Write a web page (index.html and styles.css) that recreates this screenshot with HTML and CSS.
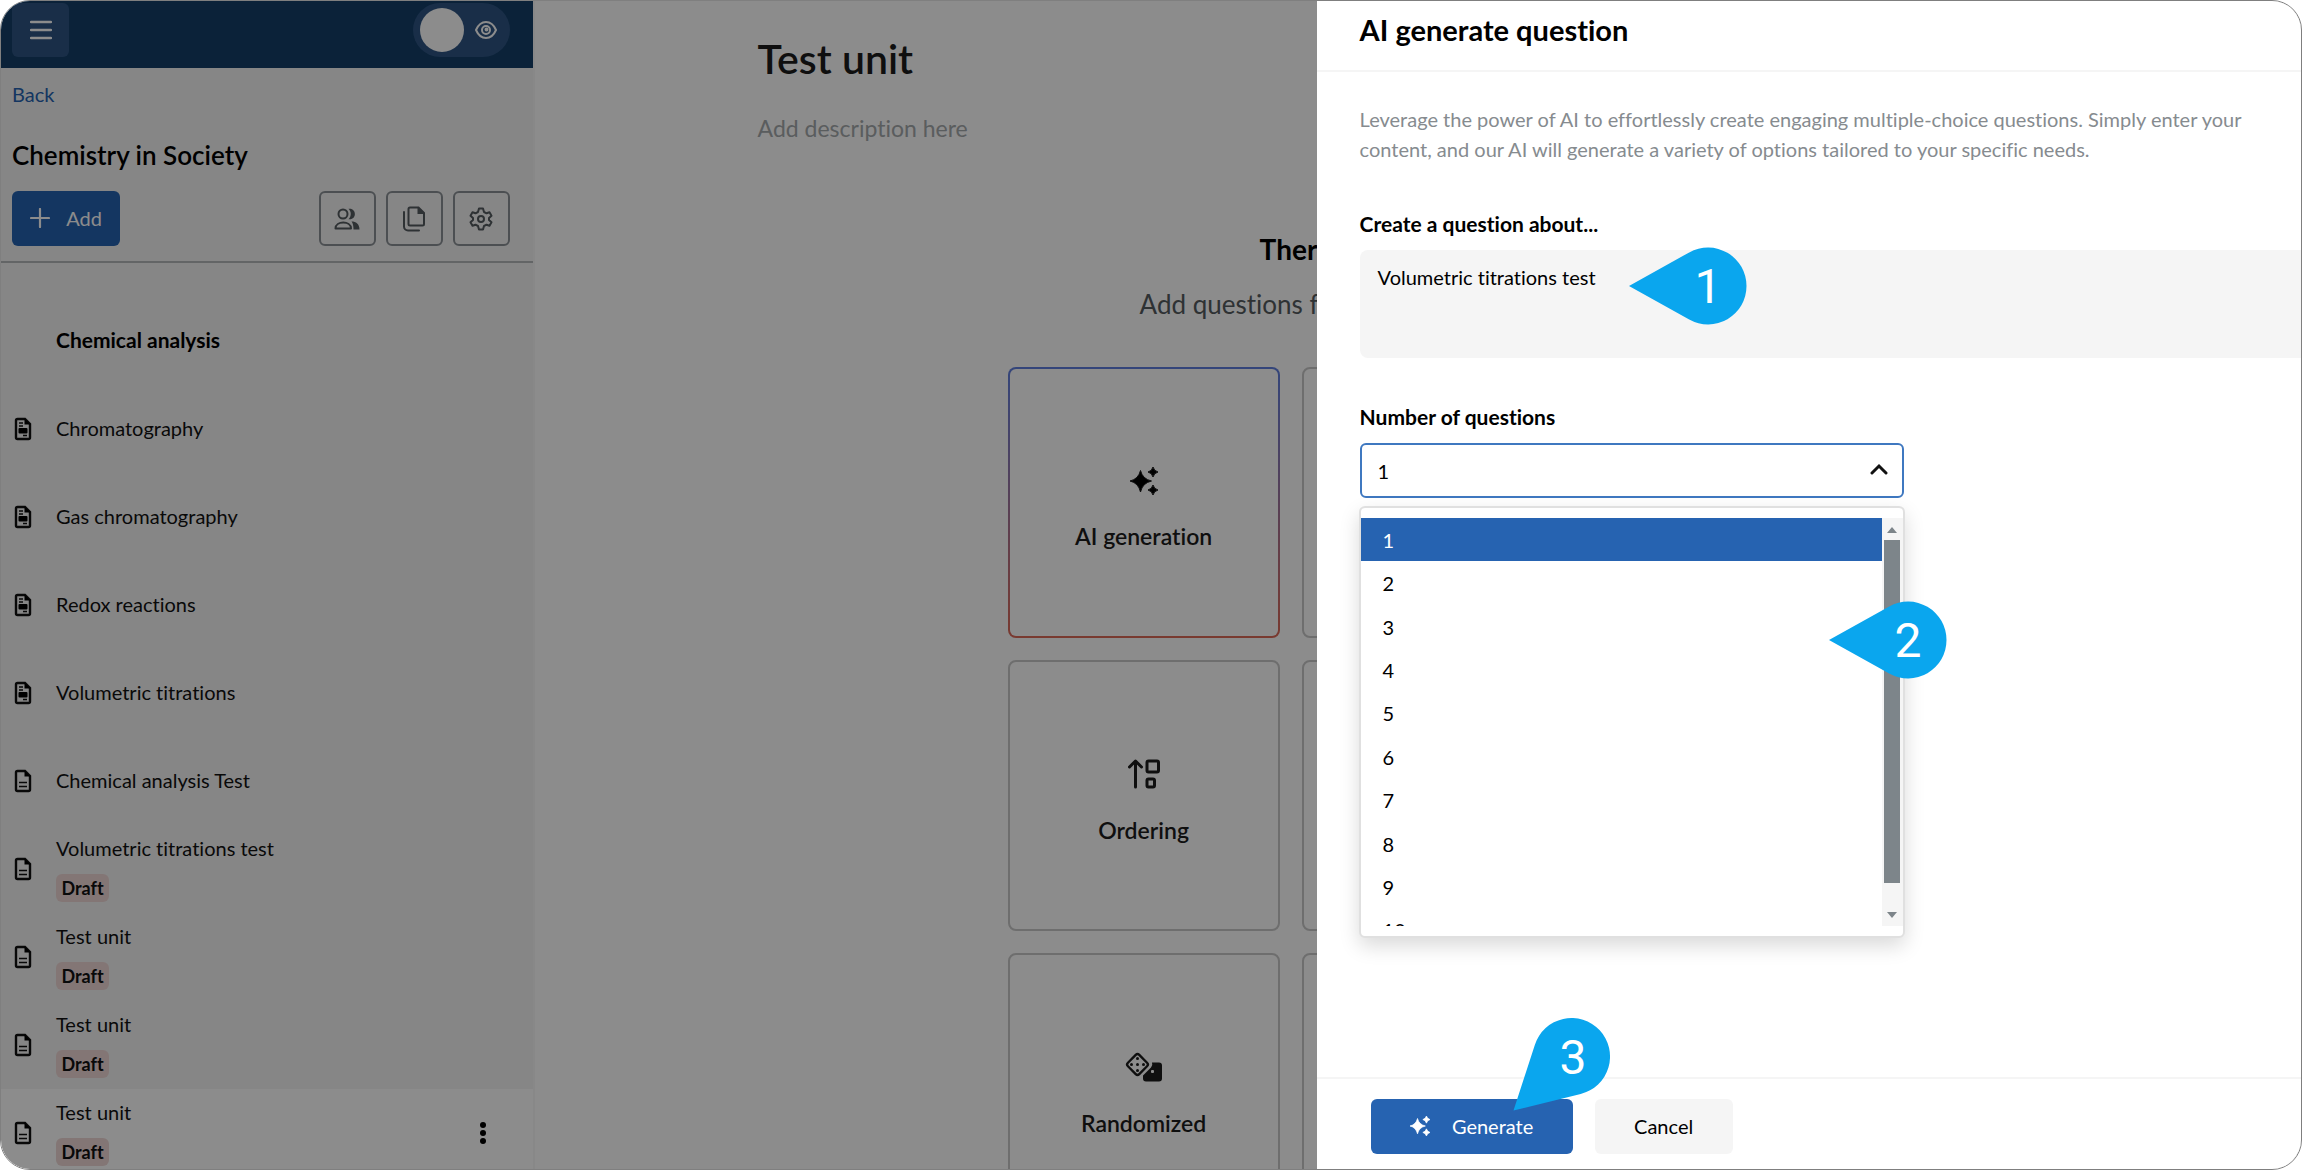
FILE: index.html
```
<!DOCTYPE html>
<html lang="en">

<head>
  <meta charset="utf-8">
  <title>Test unit</title>
  <link rel="stylesheet" href="styles.css">
</head>

<body>
  <!-- shared icons -->
  <svg class="defs" width="0" height="0" aria-hidden="true">
    <defs>
      <symbol id="icon-sparkle" viewBox="0 0 28 28">
        <path d="M10.500 3.500Q12.500 12 21.500 14Q12.500 16 10.500 25Q8.500 16 0 14Q8.500 12 10.500 3.500Z" stroke="currentColor" stroke-width="1" stroke-linejoin="round" />
        <path d="M23 0Q24 4 28 5Q24 6 23 10Q22 6 18 5Q22 4 23 0Z" stroke="currentColor" stroke-width="1" stroke-linejoin="round" />
        <path d="M23 18Q24 22 28 23Q24 24 23 28Q22 24 18 23Q22 22 23 18Z" stroke="currentColor" stroke-width="1" stroke-linejoin="round" />
      </symbol>
      <symbol id="icon-doc" viewBox="0 0 18 24">
        <path d="M3.500 2H11L16 7V20.500A1.500 1.500 0 0 1 14.500 22H3.500A1.500 1.500 0 0 1 2 20.500V3.500A1.500 1.500 0 0 1 3.500 2Z" fill="none" stroke="currentColor" stroke-width="2.400" />
        <path d="M10.500 1.500V7.500H16.500Z" />
        <path d="M5 13.500H13M5 17.500H13" stroke="currentColor" stroke-width="1.600" />
      </symbol>
      <symbol id="icon-article" viewBox="0 0 18 24">
        <path d="M3.500 2H11L16 7V20.500A1.500 1.500 0 0 1 14.500 22H3.500A1.500 1.500 0 0 1 2 20.500V3.500A1.500 1.500 0 0 1 3.500 2Z" fill="none" stroke="currentColor" stroke-width="2.400" />
        <path d="M10.500 1.500V7.500H16.500Z" />
        <path d="M5 6H9M5 9H9M9 18.500H13" stroke="currentColor" stroke-width="1.400" />
        <rect x="4.500" y="11" width="9" height="5.500" rx="1" />
      </symbol>
    </defs>
  </svg>

  <div class="app">
    <aside class="sidebar">
      <header class="topbar">
        <button type="button" class="menu-btn" aria-label="Menu">
          <svg width="22" height="20" viewBox="0 0 22 20"><path d="M1 2H21M1 10H21M1 18H21" fill="none" stroke="#fff" stroke-width="2.400" stroke-linecap="round" /></svg>
        </button>
        <button type="button" class="preview-toggle" aria-label="Preview">
          <span class="knob"></span>
          <svg width="22" height="18" viewBox="0 0 22 18" fill="none" stroke="#fff" stroke-width="2">
            <path d="M1 9Q4.500 1 11 1T21 9Q17.500 17 11 17T1 9Z" />
            <circle cx="11" cy="9" r="4" />
            <circle cx="11.500" cy="8.500" r="1" />
          </svg>
        </button>
      </header>

      <div class="course">
        <a class="back" href="#">Back</a>
        <h2>Chemistry in Society</h2>
        <div class="course-actions">
          <button type="button" class="btn btn-add">
            <svg width="20" height="20" viewBox="0 0 20 20"><path d="M10 1V19M1 10H19" stroke="#fff" stroke-width="2.200" stroke-linecap="round" /></svg>
            Add
          </button>
          <button type="button" class="icon-btn" aria-label="Members">
            <svg width="26" height="22" viewBox="0 0 26 22">
              <circle cx="9" cy="6" r="4.500" fill="none" stroke="currentColor" stroke-width="2" />
              <path d="M1.500 20.500C1.500 12.500 17 12.500 17 20.500Z" fill="none" stroke="currentColor" stroke-width="2" stroke-linejoin="round" />
              <path d="M14.500 .8C23 -.5 23 12.500 14.500 11.200C17.500 8 17.500 4 14.500 .8ZM17.500 13.500C22 13.500 25.500 16 25.500 21.500H19.500C19.500 18 19 15.500 17.500 13.500Z" fill="currentColor" />
            </svg>
          </button>
          <button type="button" class="icon-btn" aria-label="Copy">
            <svg width="24" height="26" viewBox="0 0 24 26">
              <path d="M8 1.500H16.500L22 7V18A1.500 1.500 0 0 1 20.500 19.500H8A1.500 1.500 0 0 1 6.500 18V3A1.500 1.500 0 0 1 8 1.500Z" fill="none" stroke="currentColor" stroke-width="2" />
              <path d="M15.500 1V8H22.500Z" fill="currentColor" />
              <path d="M2 6V20.500A4 4 0 0 0 6 24.500H17" fill="none" stroke="currentColor" stroke-width="2" stroke-linecap="round" />
            </svg>
          </button>
          <button type="button" class="icon-btn" aria-label="Settings">
            <svg width="24" height="24" viewBox="0 0 24 24" fill="none" stroke="currentColor" stroke-width="2" stroke-linejoin="round">
              <path d="M10 1.500H14L15 5L17.500 6.300L20.500 5.300L22.500 8.700L20 11V13L22.500 15.300L20.500 18.700L17.500 17.700L15 19L14 22.500H10L9 19L6.500 17.700L3.500 18.700L1.500 15.300L4 13V11L1.500 8.700L3.500 5.300L6.500 6.300L9 5Z" />
              <circle cx="12" cy="12" r="3" />
            </svg>
          </button>
        </div>
      </div>

      <nav class="units">
        <h3>Chemical analysis</h3>
        <a class="unit" href="#"><svg><use href="#icon-article" /></svg><span>Chromatography</span></a>
        <a class="unit" href="#"><svg><use href="#icon-article" /></svg><span>Gas chromatography</span></a>
        <a class="unit" href="#"><svg><use href="#icon-article" /></svg><span>Redox reactions</span></a>
        <a class="unit" href="#"><svg><use href="#icon-article" /></svg><span>Volumetric titrations</span></a>
        <a class="unit" href="#"><svg><use href="#icon-doc" /></svg><span>Chemical analysis Test</span></a>
        <a class="unit" href="#"><svg><use href="#icon-doc" /></svg><span>Volumetric titrations test <em class="draft">Draft</em></span></a>
        <a class="unit" href="#"><svg><use href="#icon-doc" /></svg><span>Test unit <em class="draft">Draft</em></span></a>
        <a class="unit" href="#"><svg><use href="#icon-doc" /></svg><span>Test unit <em class="draft">Draft</em></span></a>
        <div class="unit active">
          <svg><use href="#icon-doc" /></svg><span>Test unit <em class="draft">Draft</em></span>
          <button type="button" class="more" aria-label="More">
            <svg viewBox="0 0 6 24"><circle cx="3" cy="4" r="3" /><circle cx="3" cy="12" r="3" /><circle cx="3" cy="20" r="3" /></svg>
          </button>
        </div>
      </nav>
    </aside>

    <main class="editor">
      <h1>Test unit</h1>
      <p class="description">Add description here</p>
      <section class="empty">
        <h2>There are no questions</h2>
        <p>Add questions from the options below</p>
        <div class="types">
          <button type="button" class="type ai">
            <svg width="28" height="28"><use href="#icon-sparkle" /></svg>
            AI generation
          </button>
          <button type="button" class="type" aria-label="Multiple choice"></button>
          <button type="button" class="type">
            <svg width="32" height="30" viewBox="0 0 32 30" fill="none" stroke="currentColor" stroke-width="3" stroke-linecap="round" stroke-linejoin="round">
              <path d="M7.500 28V2M1.500 8L7.500 2L13.500 8" />
              <rect x="19" y="2" width="11.500" height="11" rx="1.500" />
              <rect x="19" y="20" width="7.500" height="8" rx="1.500" />
            </svg>
            Ordering
          </button>
          <button type="button" class="type" aria-label="Matching"></button>
          <button type="button" class="type">
            <svg width="38" height="30" viewBox="0 0 38 30">
              <path d="M27 10.500H34A3 3 0 0 1 37 13.500V26.500A3 3 0 0 1 34 29.500H21A3 3 0 0 1 18 26.500V23.500L26 15.500Q28 13 27 10.500Z" fill="currentColor" />
              <rect x="26" y="18" width="3" height="3" rx="1" fill="#fff" />
              <rect x="4.500" y="4.500" width="16" height="16" rx="2.500" transform="rotate(45 12.500 12.500)" fill="none" stroke="currentColor" stroke-width="2.400" />
              <g fill="currentColor">
                <circle cx="12.500" cy="6.500" r="1.500" /><circle cx="6.500" cy="12.500" r="1.500" /><circle cx="12.500" cy="12.500" r="1.500" /><circle cx="18.500" cy="12.500" r="1.500" /><circle cx="12.500" cy="18.500" r="1.500" />
              </g>
            </svg>
            Randomized
          </button>
          <button type="button" class="type" aria-label="Essay"></button>
        </div>
      </section>
    </main>

    <div class="backdrop"></div>

    <form class="drawer">
      <header>
        <h2>AI generate question</h2>
      </header>
      <div class="drawer-body">
        <p class="intro">Leverage the power of AI to effortlessly create engaging multiple-choice questions. Simply enter your content, and our AI will generate a variety of options tailored to your specific needs.</p>

        <label for="topic">Create a question about...</label>
        <div class="topic-field">
          <textarea id="topic">Volumetric titrations test</textarea>
          <svg class="marker marker-1" width="119" height="78" viewBox="0 0 119 78">
            <path d="M1 39L61.200 5.400A38.500 38.500 0 1 1 61.200 72.600Z" />
            <text x="80" y="56">1</text>
          </svg>
        </div>

        <label for="amount">Number of questions</label>
        <div class="amount-field">
          <select id="amount">
            <option>1</option>
          </select>
          <svg class="chevron" width="18" height="12" viewBox="0 0 18 12"><path d="M2 10L9 3L16 10" fill="none" stroke="#111" stroke-width="3" stroke-linecap="round" /></svg>
          <div class="dropdown">
            <div class="scroll-area">
              <ul role="listbox">
                <li role="option" class="selected">1</li>
                <li role="option">2</li>
                <li role="option">3</li>
                <li role="option">4</li>
                <li role="option">5</li>
                <li role="option">6</li>
                <li role="option">7</li>
                <li role="option">8</li>
                <li role="option">9</li>
                <li role="option">10</li>
              </ul>
              <div class="scrollbar">
                <svg width="10" height="6" viewBox="0 0 10 6"><path d="M0 6L5 0L10 6Z" /></svg>
                <div class="thumb"></div>
                <svg width="10" height="6" viewBox="0 0 10 6"><path d="M0 0L5 6L10 0Z" /></svg>
              </div>
            </div>
            <svg class="marker marker-2" width="119" height="78" viewBox="0 0 119 78">
              <path d="M1 39L61.200 5.400A38.500 38.500 0 1 1 61.200 72.600Z" />
              <text x="80" y="56">2</text>
            </svg>
          </div>
        </div>
      </div>
      <footer>
        <button type="submit" class="btn btn-generate">
          <svg width="20" height="20"><use href="#icon-sparkle" /></svg>
          Generate
        </button>
        <button type="button" class="btn btn-cancel">Cancel</button>
        <svg class="marker marker-3" width="98" height="94" viewBox="0 0 98 94">
          <path d="M.5 92.500L21.900 26.700A38.500 38.500 0 1 1 67.700 75.900Z" />
          <text x="60" y="56">3</text>
        </svg>
      </footer>
    </form>
  </div>
</body>

</html>
```
FILE: styles.css
```
* {
  box-sizing: border-box;
}

body {
  margin: 0;
  background: #fff;
  color: #000;
  font-family: Lato, "Open Sans", sans-serif;
  font-size: 20px;
  font-variant-ligatures: none;
  line-height: 30px;
}

h1, h2, h3, p, ul {
  margin: 0;
  padding: 0;
}

button, textarea, select {
  font: inherit;
  font-variant-ligatures: none;
  color: inherit;
  border: 0;
  padding: 0;
  background: none;
}

.defs {
  position: absolute;
}

.app {
  position: relative;
  display: flex;
  height: 100vh;
  border: 1px solid #7f7f7f;
  border-radius: 30px;
  overflow: hidden;
}

/* Sidebar */
.sidebar {
  flex: 0 0 23.2%;
  background: #f4f4f4;
  border-right: 2px solid #f8f8f8;
}

.topbar {
  display: flex;
  justify-content: space-between;
  height: 67px;
  padding: 2px 23px 10px 11px;
  background: #143e68;
}

.menu-btn {
  display: flex;
  align-items: center;
  justify-content: center;
  width: 57px;
  height: 54px;
  border-radius: 6px;
  background: #2e5583;
}

.preview-toggle {
  display: flex;
  align-items: center;
  justify-content: space-between;
  width: 97px;
  height: 54px;
  padding: 0 13px 0 7px;
  border-radius: 27px;
  background: #2e5583;
}

.knob {
  width: 44px;
  height: 44px;
  border-radius: 50%;
  background: #fff;
}

.course {
  padding: 11px 23px 15px 11px;
  border-bottom: 2px solid #b4b8ba;
}

.back {
  display: block;
  color: #2663b1;
  text-decoration: none;
}

.course h2 {
  margin: 31px 0 21px;
  font-size: 26px;
  font-weight: 600;
  line-height: 30px;
}

.course-actions {
  display: flex;
  gap: 10px;
}

.btn {
  display: flex;
  align-items: center;
  justify-content: center;
  height: 55px;
  padding-bottom: 2px;
  border-radius: 6px;
}

.btn-add {
  gap: 16px;
  width: 108px;
  margin-right: auto;
  background: #2663b1;
  color: #fff;
}

.icon-btn {
  display: flex;
  align-items: center;
  justify-content: center;
  width: 57px;
  height: 55px;
  border: 2px solid #8b9196;
  border-radius: 6px;
  color: #555b60;
}

.units {
  padding-top: 34px;
}

.units h3,
.unit {
  display: flex;
  align-items: center;
  height: 88px;
  font-size: 20px;
}

.units h3 {
  padding: 0 0 3px 55px;
  font-size: 21px;
}

.unit {
  gap: 24px;
  padding: 0 47px 0 13px;
  color: #111;
  text-decoration: none;
}

.unit > svg {
  width: 18px;
  height: 24px;
}

.unit > span {
  padding-bottom: 3px;
}

.unit.active {
  background: #fff;
}

.draft {
  display: block;
  width: 53px;
  margin-top: 11px;
  border-radius: 6px;
  background: #efd8d6;
  font-size: 18px;
  font-style: normal;
  font-weight: bold;
  line-height: 28px;
  text-align: center;
}

.more {
  display: flex;
  margin-left: auto;
}

.more svg {
  width: 6px;
  height: 24px;
}

/* Unit editor */
.editor {
  flex: 1;
  padding: 30px 0 0 223px;
  overflow: hidden;
  white-space: nowrap;
}

.editor h1 {
  font-size: 41px;
  font-weight: 600;
  line-height: 56px;
  color: #1c1c1c;
}

.description {
  margin-top: 26px;
  font-size: 23px;
  color: #a5a9ac;
}

.empty {
  display: flex;
  flex-direction: column;
  padding-left: 250px;
}

.empty h2 {
  margin-top: 88px;
  padding-left: 252px;
  font-size: 28px;
  line-height: 36px;
}

.empty p {
  margin-top: 21px;
  padding-left: 132px;
  font-size: 26px;
  line-height: 32px;
  color: #555b60;
}

.types {
  display: grid;
  grid-template-columns: 272px 272px;
  grid-auto-rows: 271px;
  gap: 22px;
  margin-top: 47px;
}

.type {
  display: flex;
  flex-direction: column;
  align-items: center;
  justify-content: center;
  gap: 26px;
  padding-top: 12px;
  border: 2px solid #c8c8c8;
  border-radius: 8px;
  font-size: 23px;
  font-weight: 600;
  color: #1c1c1c;
}

.type.ai {
  border-color: transparent;
  background: linear-gradient(#fff, #fff) padding-box, linear-gradient(#5f7fe0, #dd6a58) border-box;
}

.backdrop {
  position: absolute;
  inset: 0;
  background: rgba(0, 0, 0, 0.45);
}

/* Drawer */
.drawer {
  position: absolute;
  top: 0;
  right: 0;
  bottom: 0;
  display: flex;
  flex-direction: column;
  width: 42.8%;
  background: #fff;
}

.drawer header {
  padding: 13px 43px 24px;
  border-bottom: 2px solid #f5f5f5;
}

.drawer h2 {
  font-size: 29px;
  line-height: 32px;
}

.drawer-body {
  flex: 1;
  padding: 32px 0 0 43px;
}

.intro {
  margin-bottom: 45px;
  padding-right: 40px;
  color: #868b8f;
}

.drawer label {
  display: block;
  margin-bottom: 11px;
  font-size: 21px;
  font-weight: bold;
}

.topic-field {
  position: relative;
  margin-bottom: 44px;
}

textarea {
  display: block;
  width: 100%;
  height: 108px;
  padding: 12px 18px;
  border-radius: 8px 0 0 8px;
  background: #f5f5f5;
  resize: none;
}

.amount-field {
  position: relative;
  width: 544px;
}

select {
  display: block;
  width: 100%;
  height: 55px;
  padding: 0 16px;
  border: 2px solid #3f78c0;
  border-radius: 6px;
  appearance: none;
}

.chevron {
  position: absolute;
  top: 20px;
  right: 16px;
}

.dropdown {
  position: absolute;
  top: 63px;
  left: -1px;
  right: -1px;
  padding: 10px 0;
  border: 2px solid #e0e0e0;
  border-radius: 6px;
  background: #fff;
  box-shadow: 0 8px 20px rgba(0, 0, 0, 0.15);
}

.scroll-area {
  display: flex;
  align-items: flex-start;
  height: 408px;
  overflow: hidden;
}

.dropdown ul {
  display: flex;
  flex: 1;
  flex-direction: column;
  height: 434px;
  list-style: none;
}

.dropdown li {
  display: flex;
  flex: 1;
  align-items: center;
  padding-left: 22px;
}

.dropdown .selected {
  background: #2663b1;
  color: #fff;
}

.scrollbar {
  display: flex;
  flex-direction: column;
  align-items: center;
  width: 21px;
  height: 408px;
  padding: 9px 0 8px;
  background: #f5f5f5;
  fill: #7d858a;
}

.thumb {
  width: 16px;
  height: 343px;
  margin: 7px 0 auto;
  background: #7d858a;
}

.drawer footer {
  position: relative;
  display: flex;
  gap: 22px;
  padding: 20px 54px 15px;
  border-top: 2px solid #f5f5f5;
}

.btn-generate {
  gap: 22px;
  width: 202px;
  background: #2663b1;
  color: #fff;
  fill: #fff;
}

.btn-cancel {
  width: 138px;
  background: #f5f5f5;
}

/* Step markers */
.marker {
  position: absolute;
  fill: #0aa6ee;
}

.marker text {
  fill: #fff;
  font-family: Roboto, sans-serif;
  font-size: 48px;
  text-anchor: middle;
}

.marker-1 {
  top: -3px;
  left: 268px;
}

.marker-2 {
  top: 93px;
  left: 467px;
}

.marker-3 {
  top: -61px;
  left: 196px;
}
```
